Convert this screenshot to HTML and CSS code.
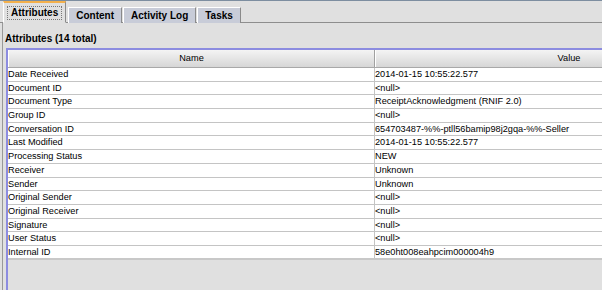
FILE: index.html
```html
<!DOCTYPE html>
<html lang="en">
<head>
  <meta charset="UTF-8" />
  <title>Attributes</title>
  <link rel="stylesheet" href="styles.css">
</head>
<body>

  <div class="panel">
    <div class="tabbar">
      <div class="tab active"><span class="focus">Attributes</span></div>
      <div class="tab">Content</div>
      <div class="tab">Activity Log</div>
      <div class="tab">Tasks</div>
    </div>

    <div class="tab-body">
      <div class="caption">Attributes (14 total)</div>

      <div class="table">
        <div class="row head">
          <div class="cell">Name</div>
          <div class="cell">Value</div>
        </div>
        <div class="row"><div class="cell">Date Received</div><div class="cell">2014-01-15 10:55:22.577</div></div>
        <div class="row"><div class="cell">Document ID</div><div class="cell">&lt;null&gt;</div></div>
        <div class="row"><div class="cell">Document Type</div><div class="cell">ReceiptAcknowledgment (RNIF 2.0)</div></div>
        <div class="row"><div class="cell">Group ID</div><div class="cell">&lt;null&gt;</div></div>
        <div class="row"><div class="cell">Conversation ID</div><div class="cell">654703487-%%-ptll56bamip98j2gqa-%%-Seller</div></div>
        <div class="row"><div class="cell">Last Modified</div><div class="cell">2014-01-15 10:55:22.577</div></div>
        <div class="row"><div class="cell">Processing Status</div><div class="cell">NEW</div></div>
        <div class="row"><div class="cell">Receiver</div><div class="cell">Unknown</div></div>
        <div class="row"><div class="cell">Sender</div><div class="cell">Unknown</div></div>
        <div class="row"><div class="cell">Original Sender</div><div class="cell">&lt;null&gt;</div></div>
        <div class="row"><div class="cell">Original Receiver</div><div class="cell">&lt;null&gt;</div></div>
        <div class="row"><div class="cell">Signature</div><div class="cell">&lt;null&gt;</div></div>
        <div class="row"><div class="cell">User Status</div><div class="cell">&lt;null&gt;</div></div>
        <div class="row"><div class="cell">Internal ID</div><div class="cell">58e0ht008eahpcim000004h9</div></div>
      </div>
    </div>
  </div>

</body>
</html>
```

FILE: styles.css
```css
body {
  margin: 0;
  background: white;
  font-family: 'Liberation Sans', Arial, sans-serif;
  color: #000;
}

.panel {
  width: 602px;
  height: 290px;
  background: #e0e0e0;
  overflow: hidden;
  display: flex;
  flex-direction: column;
}

/* tab strip */
.tabbar {
  height: 21px;
  border-top: 1px solid #7d8ea0;
  border-bottom: 1px solid #8e8e8e;
  display: flex;
  align-items: flex-end;
  padding-left: 3px;
  gap: 1px;
}

.tab {
  height: 15px;
  padding: 0 7px;
  margin-bottom: -1px;
  background: #c8ccd8;
  border-top: 1px solid #fff;
  border-left: 1px solid #fff;
  border-right: 1px solid #8a8a8a;
  font-size: 10px;
  font-weight: bold;
  line-height: 15px;
}

.tab.active {
  height: 19px;
  background: #e0e0e0;
  border-top: 2px solid #f3b04c;
  padding: 0 3px;
  margin-right: 1px;
  border-bottom: 1px solid #e0e0e0;
  display: flex;
  align-items: center;
}

.focus {
  border: 1px dotted #777;
  padding: 0 3px;
  line-height: 12px;
}

/* content */
.tab-body {
  flex: 1;
  margin-left: 2px;
  border-left: 1px solid #999;
  padding-left: 3px;
}

.caption {
  font-size: 10px;
  font-weight: bold;
  margin: 10px 0 0 -1px;
  height: 15px;
}

.table {
  width: 760px;
  border-top: 2px solid #8c8ce0;
  border-left: 2px solid #8c8ce0;
  height: 300px;
}

.row {
  display: grid;
  grid-template-columns: 367px 388px;
  height: 13.7px;
  background: white;
  font-size: 9.2px;
  line-height: 12px;
  box-sizing: border-box;
  border-bottom: 1px solid #c4c4c4;
}

.row .cell {
  white-space: nowrap;
  overflow: hidden;
}

.row .cell:first-child {
  border-right: 1px solid #c4c4c4;
}

.row.head {
  height: 18px;
  background: linear-gradient(#f4f4f4, #d6d6d6);
  border-bottom: 1px solid #a8a8a8;
  line-height: 17px;
}

.row.head .cell {
  text-align: center;
  border-right: 1px solid #a0a0a0;
  border-left: 1px solid #fff;
}

.row:last-child {
  border-bottom: 2px solid #c8c8c8;
}
```
